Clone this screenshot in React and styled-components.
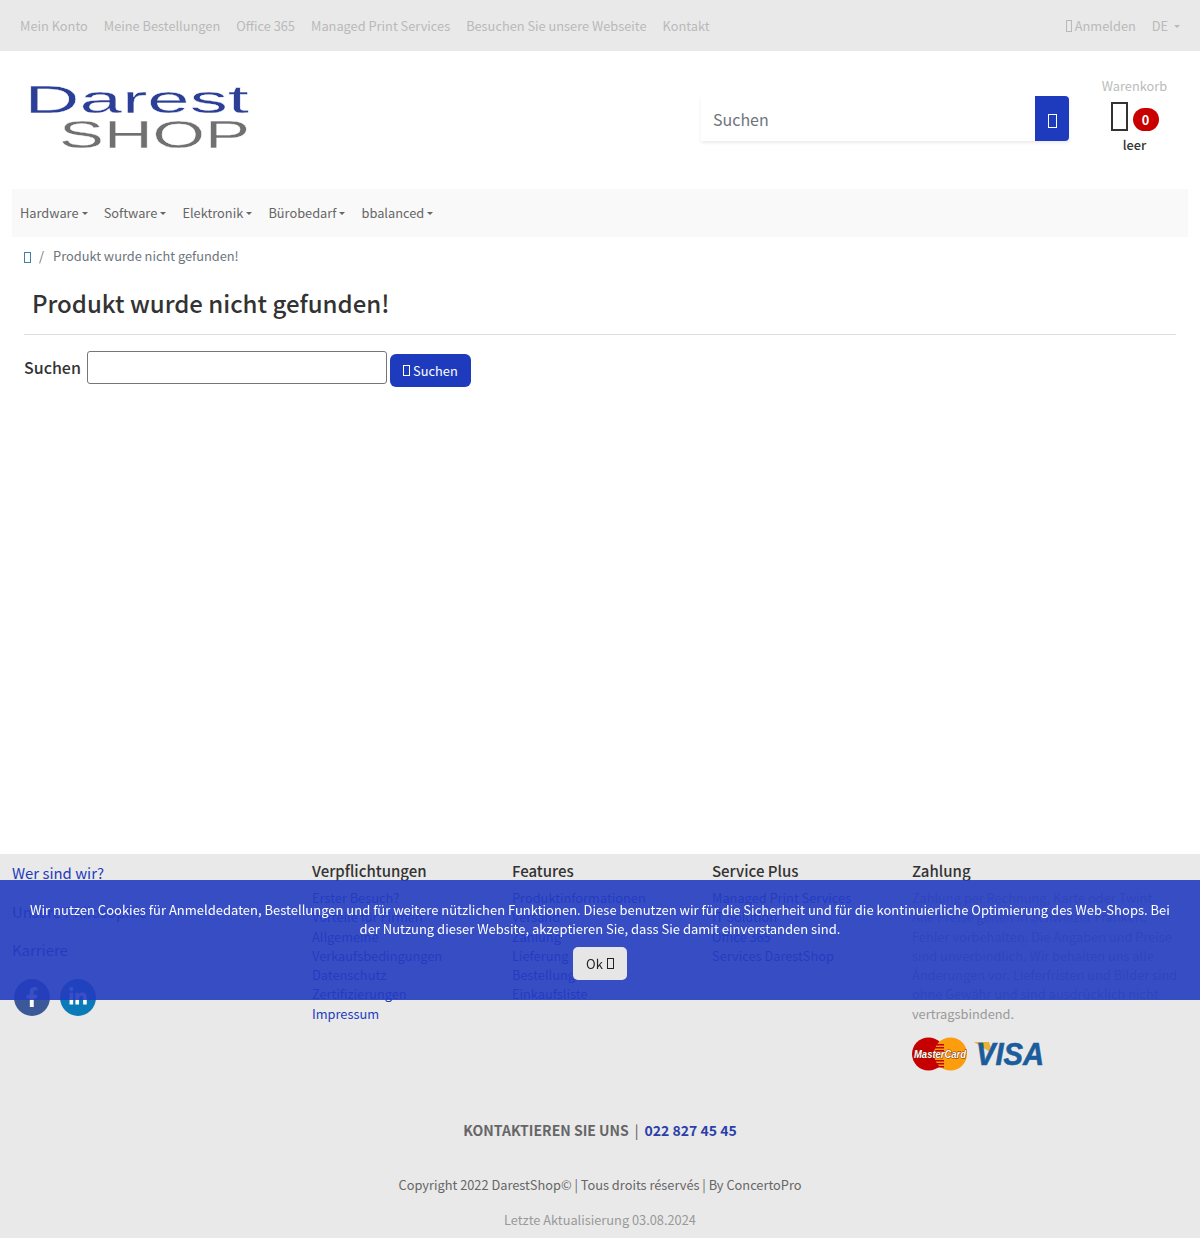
import React from 'react'
import styled, { createGlobalStyle } from 'styled-components'
import { FaFacebookF, FaLinkedinIn } from 'react-icons/fa'

const fontStack = `"Noto Sans CJK SC", "Noto Sans", sans-serif`
const blue = '#1f3bbd'

const Global = createGlobalStyle`
    html, body {
        margin: 0;
        padding: 0;
        background: #fff;
        font-family: ${fontStack};
        font-size: 12.8px;
        line-height: 19.4px;
        color: #333;
    }
    * { box-sizing: border-box; }
`

const Page = styled.div`
    width: 1200px;
    min-height: 1238px;
    display: flex;
    flex-direction: column;
`

// icon font never loaded on the page, so the glyphs show as empty boxes
const Tofu = styled.span`
    display: inline-block;
    width: ${props => props.w || 8}px;
    height: ${props => props.h || 12}px;
    border: ${props => props.thick ? 2 : 1}px solid currentColor;
    vertical-align: ${props => props.align || -1}px;
    flex: none;
`

const Caret = styled.span`
    display: inline-block;
    margin-left: 3px;
    vertical-align: 3px;
    border-top: 3.5px solid currentColor;
    border-left: 3.5px solid transparent;
    border-right: 3.5px solid transparent;
`

const TopBar = styled.div`
    height: 51px;
    background: #e9e9e9;
    display: flex;
    align-items: center;
    justify-content: space-between;
    padding: 1px 20px 0;
    color: #b9b9b9;
`

const TopLinks = styled.div`
    display: flex;
    gap: 16px;
`

const Header = styled.header`
    height: 138px;
    display: flex;
    align-items: flex-start;
    justify-content: space-between;
    padding: 26px 33px 0 30px;
`

const LogoBox = styled.svg`
    display: block;
    margin-top: 8px;
    overflow: visible;
`

const HeaderRight = styled.div`
    display: flex;
    align-items: flex-start;
    gap: 33px;
`

const SearchBox = styled.div`
    width: 368px;
    height: 45px;
    margin-top: 19px;
    display: flex;
    box-shadow: 0 2px 3px rgba(0, 0, 0, 0.08);
`

const SearchText = styled.div`
    flex: 1;
    padding-left: 12px;
    font-size: 16px;
    line-height: 47px;
    color: #6f757b;
`

const SearchBtn = styled.div`
    width: 34px;
    background: ${blue};
    border-radius: 0 4px 4px 0;
    color: #fff;
    display: flex;
    align-items: center;
    justify-content: center;
    padding-top: 4px;
`

const Cart = styled.div`
    width: 65px;
    margin-top: -1px;
    display: flex;
    flex-direction: column;
    align-items: center;
    color: #bbb;
    white-space: nowrap;
`

const CartRow = styled.div`
    display: flex;
    align-items: center;
    gap: 5px;
    margin-top: 7px;
    color: #333;
`

const Badge = styled.span`
    width: 26px;
    height: 23px;
    margin-top: 5px;
    border-radius: 12px;
    background: #c80000;
    color: #fff;
    font-weight: 700;
    text-align: center;
    line-height: 23px;
`

const CartLabel = styled.div`
    color: #333;
    font-weight: 500;
    margin-top: 4px;
`

const Nav = styled.nav`
    height: 48px;
    margin: 0 12px;
    padding: 0 8px;
    background: #f9f9f9;
    color: #666;
    display: flex;
    align-items: center;
    gap: 16.15px;
`

const Main = styled.main`
    flex: 1;
    padding: 9px 24px 0;
`

const Crumbs = styled.div`
    display: flex;
    align-items: center;
    height: 20px;
    color: #6c757d;
`

const CrumbIcon = styled.span`
    color: #3f7fa8;
    display: inline-flex;
    margin-top: 2px;
`

const CrumbSep = styled.span`
    margin: 0 9px 0 8px;
`

const Title = styled.h1`
    margin: 0;
    padding: 19px 8px 12px;
    height: 69px;
    font-size: 24px;
    line-height: 36px;
    font-weight: 500;
    color: #333;
    border-bottom: 1px solid #dedede;
`

const SearchForm = styled.form`
    display: flex;
    align-items: flex-start;
    margin-top: 16px;
`

const FormLabel = styled.label`
    font-size: 16px;
    font-weight: 500;
    line-height: 33px;
    margin-right: 6px;
    color: #333;
`

const FormInput = styled.div`
    width: 300px;
    height: 33px;
    border: 1px solid #767676;
    border-radius: 3px;
    background: #fff;
`

const FormButton = styled.div`
    height: 33px;
    width: 81px;
    margin: 3px 0 0 3px;
    border-radius: 6px;
    background: ${blue};
    color: #fff;
    display: flex;
    align-items: center;
    justify-content: center;
    gap: 3px;
`

const Footer = styled.footer`
    height: 384px;
    background: #e9e9e9;
    padding-top: 5px;
`

const Columns = styled.div`
    display: grid;
    grid-template-columns: 300px 200px 200px 200px 264px;
    height: 220px;
    padding: 0 12px;
`

const ColTitle = styled.div`
    font-size: 15px;
    font-weight: 500;
    line-height: 22px;
    padding-top: 1px;
    height: 23px;
    color: #333;
    margin-bottom: 6px;
`

const FootLink = styled.div`
    color: ${blue};
    line-height: 19.25px;
    white-space: nowrap;
`

const AboutLink = styled.div`
    color: ${blue};
    font-size: 14.9px;
    line-height: 20px;
    height: 38.5px;
    padding-top: 4px;
`

const Socials = styled.div`
    display: flex;
    gap: 10px;
    margin: 4px 0 0 2px;
`

const Social = styled.div`
    width: 36px;
    height: 37px;
    border-radius: 50%;
    background: ${props => props.color};
    color: #fff;
    display: flex;
    align-items: center;
    justify-content: center;
    font-size: 20px;
`

const PayText = styled.div`
    width: 272px;
    color: #999;
    line-height: 19.25px;
    white-space: nowrap;
`

const PayLogos = styled.svg`
    display: block;
    margin-top: 14px;
    overflow: visible;
`

const Contact = styled.div`
    text-align: center;
    font-size: 14px;
    font-weight: 700;
    line-height: 20px;
    color: #666;
    margin-top: 41px;
`

const Phone = styled.span`
    color: #2b3fa8;
`

const Pipe = styled.span`
    display: inline-block;
    font-weight: 400;
    margin: 0 6px;
    color: #555;
`

const Copyright = styled.div`
    text-align: center;
    color: #666;
    margin-top: 35px;
`

const Updated = styled.div`
    text-align: center;
    color: #999;
    margin-top: 16px;
`

const CookieBar = styled.div`
    position: fixed;
    top: 880px;
    left: 0;
    right: 0;
    height: 120px;
    background: rgba(36, 60, 192, 0.9);
    color: #fff;
    font-size: 13px;
    text-align: center;
    padding: 20px 30px 0;
`

const CookieOk = styled.div`
    width: 54px;
    height: 33px;
    margin: 8px auto 0;
    background: #e6e6e6;
    border-radius: 5px;
    color: #222;
    display: flex;
    align-items: center;
    justify-content: center;
    gap: 4px;
`

function Logo() {
    return (
        <LogoBox width="218" height="64" viewBox="0 0 218 64">
            <text x="-5.5" y="28" fontFamily="Liberation Sans" fontSize="39" fill="#2b3f96" stroke="#fff" strokeWidth="0.3" textLength="224.5" lengthAdjust="spacingAndGlyphs">Darest</text>
            <text x="29" y="63" fontFamily="Liberation Sans" fontSize="38" fill="#707070" stroke="#fff" strokeWidth="0.3" textLength="191" lengthAdjust="spacingAndGlyphs">SHOP</text>
        </LogoBox>
    )
}

function Cards() {
    const stripes = [7, 10, 13, 23, 26, 29]
    return (
        <PayLogos width="134" height="34" viewBox="0 0 134 34">
            <circle cx="16.5" cy="17" r="16.5" fill="#c60000" />
            <circle cx="38.5" cy="17" r="16.5" fill="#fb9d0c" />
            {stripes.map(y => <rect key={y} x="23" y={y} width="9" height="1.5" fill="#c60000" />)}
            <text x="2" y="21" fontFamily="Liberation Sans" fontSize="11.5" fontWeight="700" fontStyle="italic" fill="#fff" stroke="#7a2200" strokeWidth="1" paintOrder="stroke" textLength="52" lengthAdjust="spacingAndGlyphs">MasterCard</text>
            <polygon points="62,5 77,5 81,17" fill="#e8b13a" />
            <text x="64" y="28" fontFamily="Liberation Sans" fontSize="31" fontWeight="700" fontStyle="italic" fill="#1a5c9c" stroke="#1a5c9c" strokeWidth="0.6" textLength="68" lengthAdjust="spacingAndGlyphs">VISA</text>
        </PayLogos>
    )
}

function App() {
    const topLinks = ['Mein Konto', 'Meine Bestellungen', 'Office 365', 'Managed Print Services', 'Besuchen Sie unsere Webseite', 'Kontakt']
    const navLinks = ['Hardware', 'Software', 'Elektronik', 'Bürobedarf', 'bbalanced']
    const verpflichtungen = ['Erster Besuch?', 'Vorteile für Firmen', 'Allgemeine', 'Verkaufsbedingungen', 'Datenschutz', 'Zertifizierungen', 'Impressum']
    const features = ['Produktinformationen', 'Versand', 'Zahlung', 'Lieferung', 'Bestellung', 'Einkaufsliste']
    const services = ['Managed Print Services', 'IT Solution', 'Office 365', 'Services DarestShop']

    return (
        <Page>
            <Global />
            <TopBar>
                <TopLinks>
                    {topLinks.map(t => <span key={t}>{t}</span>)}
                </TopLinks>
                <TopLinks>
                    <span><Tofu w={6} /> Anmelden</span>
                    <span>DE <Caret /></span>
                </TopLinks>
            </TopBar>

            <Header>
                <Logo />
                <HeaderRight>
                    <SearchBox>
                        <SearchText>Suchen</SearchText>
                        <SearchBtn><Tofu w={9} h={14} /></SearchBtn>
                    </SearchBox>
                    <Cart>
                        <span>Warenkorb</span>
                        <CartRow>
                            <Tofu w={17} h={29} thick />
                            <Badge>0</Badge>
                        </CartRow>
                        <CartLabel>leer</CartLabel>
                    </Cart>
                </HeaderRight>
            </Header>

            <Nav>
                {navLinks.map(t => <span key={t}>{t}<Caret /></span>)}
            </Nav>

            <Main>
                <Crumbs>
                    <CrumbIcon><Tofu w={7} h={11} /></CrumbIcon>
                    <CrumbSep>/</CrumbSep>
                    <span>Produkt wurde nicht gefunden!</span>
                </Crumbs>
                <Title>Produkt wurde nicht gefunden!</Title>
                <SearchForm>
                    <FormLabel>Suchen</FormLabel>
                    <FormInput />
                    <FormButton><Tofu w={7} h={11} />Suchen</FormButton>
                </SearchForm>
            </Main>

            <Footer>
                <Columns>
                    <div>
                        <AboutLink>Wer sind wir?</AboutLink>
                        <AboutLink>Unsere Philosophie</AboutLink>
                        <AboutLink>Karriere</AboutLink>
                        <Socials>
                            <Social color="#3b5998"><FaFacebookF /></Social>
                            <Social color="#0a7ab8"><FaLinkedinIn /></Social>
                        </Socials>
                    </div>
                    <div>
                        <ColTitle>Verpflichtungen</ColTitle>
                        {verpflichtungen.map(t => <FootLink key={t}>{t}</FootLink>)}
                    </div>
                    <div>
                        <ColTitle>Features</ColTitle>
                        {features.map(t => <FootLink key={t}>{t}</FootLink>)}
                    </div>
                    <div>
                        <ColTitle>Service Plus</ColTitle>
                        {services.map(t => <FootLink key={t}>{t}</FootLink>)}
                    </div>
                    <div>
                        <ColTitle>Zahlung</ColTitle>
                        <PayText>
                            Zahlung per Rechnung, Karte oder Twint.<br />
                            Alle Preise gelten in Schweizer Franken.<br />
                            Fehler vorbehalten. Die Angaben und Preise<br />
                            sind unverbindlich. Wir behalten uns alle<br />
                            Änderungen vor. Lieferfristen und Bilder sind<br />
                            ohne Gewähr und sind ausdrücklich nicht<br />
                            vertragsbindend.
                        </PayText>
                        <Cards />
                    </div>
                </Columns>
                <Contact>
                    KONTAKTIEREN SIE UNS<Pipe>|</Pipe><Phone>022 827 45 45</Phone>
                </Contact>
                <Copyright>Copyright 2022 DarestShop© | Tous droits réservés | By ConcertoPro</Copyright>
                <Updated>Letzte Aktualisierung 03.08.2024</Updated>
            </Footer>

            <CookieBar>
                Wir nutzen Cookies für Anmeldedaten, Bestellungen und für weitere nützlichen Funktionen. Diese benutzen wir für die Sicherheit und für die kontinuierliche Optimierung des Web-Shops. Bei der Nutzung dieser Website, akzeptieren Sie, dass Sie damit einverstanden sind.
                <CookieOk>Ok <Tofu w={7} h={11} /></CookieOk>
            </CookieBar>
        </Page>
    )
}

export default App
